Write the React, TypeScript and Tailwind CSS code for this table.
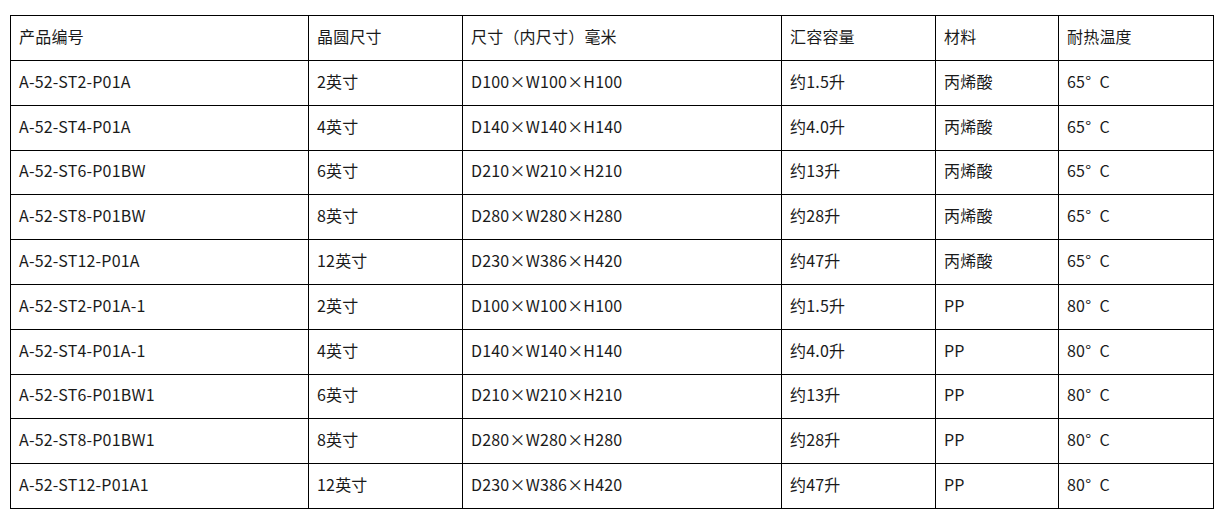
import React from 'react';

interface Row { code: string; wafer: string; size: string; cap: string; mat: string; temp: string; }

const headers = ['产品编号', '晶圆尺寸', '尺寸（内尺寸）毫米', '汇容容量', '材料', '耐热温度'];

const rows: Row[] = [
  { code: 'A-52-ST2-P01A', wafer: '2英寸', size: 'D100×W100×H100', cap: '约1.5升', mat: '丙烯酸', temp: '65°\u2002C' },
  { code: 'A-52-ST4-P01A', wafer: '4英寸', size: 'D140×W140×H140', cap: '约4.0升', mat: '丙烯酸', temp: '65°\u2002C' },
  { code: 'A-52-ST6-P01BW', wafer: '6英寸', size: 'D210×W210×H210', cap: '约13升', mat: '丙烯酸', temp: '65°\u2002C' },
  { code: 'A-52-ST8-P01BW', wafer: '8英寸', size: 'D280×W280×H280', cap: '约28升', mat: '丙烯酸', temp: '65°\u2002C' },
  { code: 'A-52-ST12-P01A', wafer: '12英寸', size: 'D230×W386×H420', cap: '约47升', mat: '丙烯酸', temp: '65°\u2002C' },
  { code: 'A-52-ST2-P01A-1', wafer: '2英寸', size: 'D100×W100×H100', cap: '约1.5升', mat: 'PP', temp: '80°\u2002C' },
  { code: 'A-52-ST4-P01A-1', wafer: '4英寸', size: 'D140×W140×H140', cap: '约4.0升', mat: 'PP', temp: '80°\u2002C' },
  { code: 'A-52-ST6-P01BW1', wafer: '6英寸', size: 'D210×W210×H210', cap: '约13升', mat: 'PP', temp: '80°\u2002C' },
  { code: 'A-52-ST8-P01BW1', wafer: '8英寸', size: 'D280×W280×H280', cap: '约28升', mat: 'PP', temp: '80°\u2002C' },
  { code: 'A-52-ST12-P01A1', wafer: '12英寸', size: 'D230×W386×H420', cap: '约47升', mat: 'PP', temp: '80°\u2002C' },
];

const widths = ['w-[298px]', 'w-[154px]', 'w-[319px]', 'w-[154px]', 'w-[123px]', 'w-[155px]'];

export default function App() {
  return (
    <div className="bg-white w-[1229px] h-[529px] pt-[15px] pl-[10px] font-['Noto_Sans_CJK_JP','Noto_Sans_CJK_SC',sans-serif] text-[16px] tracking-[0.2px] text-[#1a1a1a]">
      <table className="border-collapse border border-black table-fixed w-[1203px]">
        <thead>
          <tr className="h-[45px]">
            {headers.map((h, i) => (
              <td key={h} className={`${widths[i]} border border-black pl-[8px] pr-[9px] pt-0 pb-[4px] font-normal`}>{h}</td>
            ))}
          </tr>
        </thead>
        <tbody>
          {rows.map(r => (
            <tr key={r.code} className="h-[44.8px]">
              {[r.code, r.wafer, r.size, r.cap, r.mat, r.temp].map((c, i) => (
                <td key={i} className="border border-black pl-[8px] pr-[9px] pt-0 pb-[4px]">{c}</td>
              ))}
            </tr>
          ))}
        </tbody>
      </table>
    </div>
  );
}
